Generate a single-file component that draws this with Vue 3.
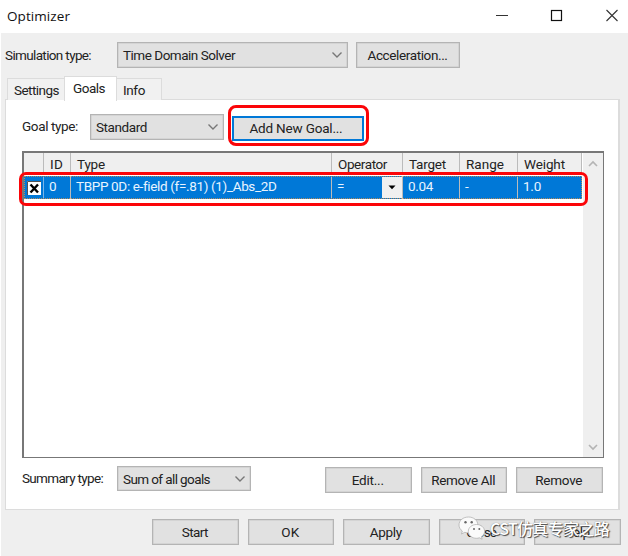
<script setup>
// Sets the tracking of a label so that it fills the given width in pixels.
const vFit = {
  mounted(el, { value }) {
    if (!value) return
    const natural = el.getBoundingClientRect().width
    el.style.letterSpacing = (value - natural) / el.textContent.length + 'px'
  },
}
const headers = [
  { text: '', w: 0 },
  { text: 'ID', w: 13 },
  { text: 'Type', w: 28 },
  { text: 'Operator', w: 49 },
  { text: 'Target', w: 37 },
  { text: 'Range', w: 38 },
  { text: 'Weight', w: 41 },
]
const editButtons = [
  { text: 'Edit...', w: 32 },
  { text: 'Remove All', w: 64 },
  { text: 'Remove', w: 47 },
]
const footerButtons = [
  { text: 'Start', w: 26 },
  { text: 'OK', w: 18 },
  { text: 'Apply', w: 32 },
  { text: 'Close', w: 30 },
  { text: 'Help', w: 26 },
]
</script>

<template>
  <div class="window">
    <header class="titlebar">
      <span v-fit="63" class="title">Optimizer</span>
      <svg class="controls" width="124" height="14" viewBox="0 0 124 14">
        <path d="M1 6.5H13" stroke="#333" fill="none" />
        <rect x="56.5" y="1.500" width="10" height="10" stroke="#111" stroke-width="1.2" fill="none" />
        <path d="M111.500 1L122.500 12M122.500 1L111.500 12" stroke="#333" stroke-width="1.1" fill="none" />
      </svg>
    </header>

    <main class="body">
      <div class="sim-row">
        <span class="sim-label"><span v-fit="86">Simulation type:</span></span>
        <div class="select sim-select">
          <span v-fit="112">Time Domain Solver</span>
          <svg width="12" height="8" viewBox="0 0 12 8"><path d="M1.5 1.5L6 6L10.5 1.5" /></svg>
        </div>
        <button class="btn accel"><span v-fit="80">Acceleration...</span></button>
      </div>

      <nav class="tabs">
        <div class="tab settings"><span v-fit="45">Settings</span></div>
        <div class="tab goals"><span v-fit="32">Goals</span></div>
        <div class="tab info"><span v-fit="22">Info</span></div>
      </nav>

      <section class="panel">
        <div class="goal-row">
          <span class="goal-label"><span v-fit="56">Goal type:</span></span>
          <div class="select goal-select">
            <span v-fit="51">Standard</span>
            <svg width="12" height="8" viewBox="0 0 12 8"><path d="M1.5 1.5L6 6L10.5 1.5" /></svg>
          </div>
          <div class="add-mark">
            <button class="btn add"><span v-fit="93">Add New Goal...</span></button>
          </div>
        </div>

        <div class="list">
          <div class="grid">
            <div class="cols head">
              <div v-for="h in headers" :key="h.text" class="cell"><span v-fit="h.w">{{ h.text }}</span></div>
            </div>
            <div class="cols row">
              <div class="cell check">
                <svg width="14" height="14" viewBox="0 0 14 14">
                  <rect width="14" height="14" fill="#fff" />
                  <path d="M.5 14V.5H14" stroke="#555" fill="none" />
                  <path d="M3.500 3.500L11 11.500M11 3.500L3.500 11.500" stroke="#000" stroke-width="2.4" fill="none" />
                </svg>
              </div>
              <div class="cell"><span>0</span></div>
              <div class="cell"><span v-fit="200">TBPP 0D: e-field (f=.81) (1)_Abs_2D</span></div>
              <div class="cell op">
                <span>=</span>
                <i class="drop"><svg width="8" height="5" viewBox="0 0 8 5"><path d="M.5.5H7.5L4 4.2Z" fill="#000" /></svg></i>
              </div>
              <div class="cell"><span v-fit="25">0.04</span></div>
              <div class="cell"><span>-</span></div>
              <div class="cell"><span v-fit="18">1.0</span></div>
            </div>
          </div>
          <div class="scroll">
            <svg width="10" height="8" viewBox="0 0 10 8"><path d="M1 6L5 2L9 6" /></svg>
            <svg width="10" height="8" viewBox="0 0 10 8"><path d="M1 2L5 6L9 2" /></svg>
          </div>
          <div class="row-mark"></div>
        </div>

        <div class="sum-row">
          <span class="sum-label"><span v-fit="81">Summary type:</span></span>
          <div class="select sum-select">
            <span v-fit="87">Sum of all goals</span>
            <svg width="12" height="8" viewBox="0 0 12 8"><path d="M1.5 1.5L6 6L10.5 1.5" /></svg>
          </div>
          <div class="edit-buttons">
            <button v-for="b in editButtons" :key="b.text" class="btn"><span v-fit="b.w">{{ b.text }}</span></button>
          </div>
        </div>
      </section>

      <footer class="footer">
        <button v-for="b in footerButtons" :key="b.text" class="btn"><span v-fit="b.w">{{ b.text }}</span></button>
      </footer>
    </main>

    <div class="watermark">
      <svg width="28" height="24" viewBox="0 0 28 24">
        <g stroke="#aaa" stroke-width=".7" fill="#fafafa">
          <path d="M10.500 1C5 1 1 4.500 1 9c0 2.500 1.300 4.600 3.300 6l-.8 3 3.300-1.700c1.200.4 2.400.6 3.700.6 5.200 0 9.300-3.500 9.300-8S15.700 1 10.500 1Z" />
          <path d="M18.500 8.500c-4.600 0-8.200 3-8.200 6.900s3.600 6.900 8.200 6.900c1 0 2-.2 2.900-.5l2.700 1.400-.6-2.400c1.900-1.300 3.100-3.200 3.100-5.400 0-3.900-3.600-6.900-8.100-6.900Z" />
        </g>
        <g fill="#666"><circle cx="7.500" cy="6.300" r="1.200" /><circle cx="13.700" cy="6.300" r="1.200" /><circle cx="16" cy="13" r="1" /><circle cx="21.300" cy="13" r="1" /></g>
      </svg>
      <span v-fit="119">CST仿真专家之路</span>
    </div>
  </div>
</template>

<style>
body { margin: 0; background: #fff; overflow: hidden; }
</style>

<style scoped>
* { box-sizing: border-box; }
.window { position: relative; width: 628px; height: 556px; overflow: hidden; background: #fff; color: #222; font: 13.5px/16px Roboto, "Liberation Sans", sans-serif; white-space: nowrap; }
.titlebar { height: 33px; padding: 0 9px 2px 7px; display: flex; align-items: center; justify-content: space-between; }
.title { font: 13.5px/18px "Open Sans", "Noto Sans", sans-serif; color: #111; }
.body { height: 523px; margin-left: 1px; background: #efefef; padding: 9px 0 0 4px; }
.sim-row { display: flex; height: 26px; align-items: center; }
.sim-label { width: 112px; }
.select { height: 26px; border: 1px solid #b4b4b4; box-shadow: inset 0 0 0 .5px #c8c8c8; background: #e1e1e1; display: flex; align-items: center; justify-content: space-between; padding: 0 4px 0 5px; }
.select svg { stroke: #777; stroke-width: 1.4; fill: none; }
.sim-select { width: 231px; margin-right: 8px; }
.btn { appearance: none; margin: 0; padding: 0 1px 1px 0; font: inherit; color: inherit; height: 26px; border: 1px solid #b4b4b4; box-shadow: inset 0 0 0 .5px #c8c8c8; border-radius: 0; background: #e1e1e1; display: flex; align-items: center; justify-content: center; }
.accel { width: 104px; }
.tabs { display: flex; align-items: flex-end; height: 24px; margin: 8px 0 0 2px; }
.tab { height: 22px; border: 1px solid #dcdcdc; border-bottom: 0; padding-top: 3px; display: flex; background: #f1f1f1; justify-content: flex-start; }
.settings { width: 57px; border-right: 0; padding-left: 6px; }
.goals { width: 53px; height: 25px; background: #fff; position: relative; z-index: 1; margin-bottom: -1px; padding-left: 8px; }
.info { width: 45px; border-left: 0; padding-left: 6px; }
.panel { width: 615px; height: 411px; margin-top: -1px; border: 1px solid #dcdcdc; border-right-width: 2px; background: #fff; padding: 5px 0 0 16px; }
.goal-row { display: flex; height: 41px; align-items: center; }
.goal-label { width: 68px; }
.goal-select { width: 134px; margin: 3px 4px 0 0; }
.add-mark { width: 141px; height: 41px; border: 3px solid #fb0508; border-radius: 8px; padding: 8px 0 0 1px; }
.add { width: 132px; height: 25px; border: 2px solid #0078d7; box-shadow: none; padding-right: 4px; }
.list { position: relative; display: flex; width: 582px; height: 307px; margin-top: 5px; border: 2px solid #777; border-bottom-width: 1px; border-right-width: 1px; }
.grid { flex: 1; }
.cols { display: grid; grid-template-columns: 20px 27px 261px 71px 57px 58px 64px; width: 558px; }
.head { height: 22px; background: #efefef; border-bottom: 1px solid #999; }
.cell { display: flex; padding-left: 6px; align-items: center; border-right: 1px solid #bbb; }
.row { height: 23px; margin-top: 1px; background: #0078d7; color: #e8f4ff; outline: 1px dotted #b48a5a; outline-offset: -1px; }
.row .cell { padding: 0 0 4px 5px; }
.row .cell:last-child { border-right: 0; }
.row .check { padding: 0 0 0 3px; border-right-color: #78b4e8; }
.row .op { padding: 0; justify-content: space-between; }
.op span { padding: 0 0 4px 5px; }
.drop { width: 20px; height: 21px; background: #f0f0f0; display: flex; align-items: center; justify-content: center; }
.scroll { width: 20px; background: #efefef; display: flex; flex-direction: column; justify-content: space-between; align-items: center; padding: 7px 0 6px; }
.scroll svg { stroke: #b4b4b4; stroke-width: 1.6; fill: none; }
.row-mark { position: absolute; left: -5px; top: 19px; width: 569px; height: 34px; border: 3px solid #fb0508; border-radius: 7px; }
.sum-row { display: flex; margin-top: 8px; }
.sum-label { width: 95px; padding-top: 4px; }
.sum-select { width: 134px; height: 25px; }
.edit-buttons { display: flex; gap: 9px; margin: 1px 0 0 74px; }
.edit-buttons .btn { width: 86.5px; }
.footer { display: flex; gap: 9px; margin: 9px 0 0 147px; }
.footer .btn { width: 86.5px; }
.watermark { position: absolute; left: 458px; top: 516px; display: flex; align-items: center; gap: 4px; color: #fff; font: 500 16px/24px "Noto Sans CJK SC", sans-serif; text-shadow: 1px 1px 1px #444, 0 0 1px #777; }
</style>
